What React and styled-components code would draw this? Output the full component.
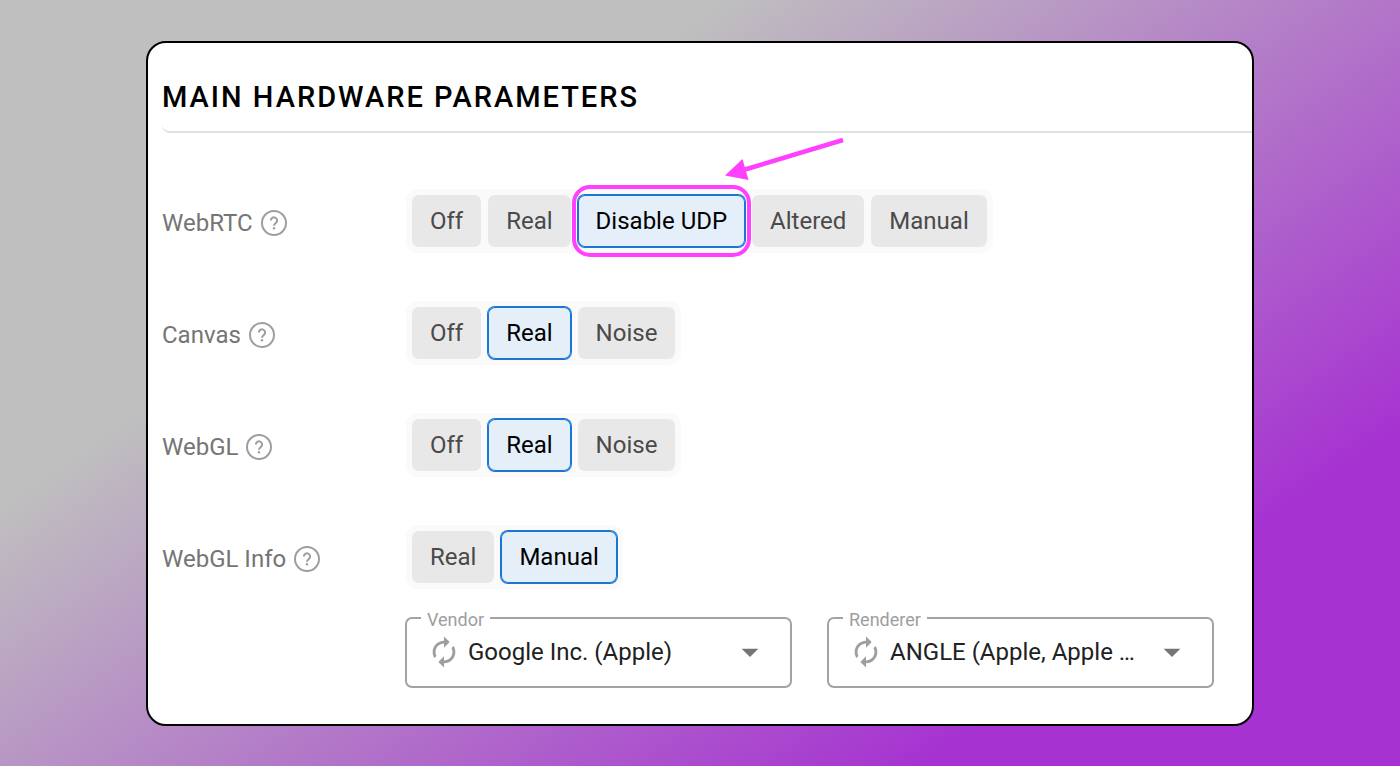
import { useState } from 'react'
import styled, { createGlobalStyle } from 'styled-components'
import { MdArrowDropDown, MdAutorenew } from 'react-icons/md'

const ROWS = [
  { name: 'WebRTC', options: ['Off', 'Real', 'Disable UDP', 'Altered', 'Manual'], value: 'Disable UDP', marked: 'Disable UDP' },
  { name: 'Canvas', options: ['Off', 'Real', 'Noise'], value: 'Real' },
  { name: 'WebGL', options: ['Off', 'Real', 'Noise'], value: 'Real' },
  { name: 'WebGL Info', options: ['Real', 'Manual'], value: 'Manual' },
]

const HelpIcon = () => (
  <svg width="28" height="28" viewBox="0 0 28 28" fill="none" stroke="currentColor" strokeWidth="2" aria-hidden="true">
    <circle cx="14" cy="14" r="12" />
    <path d="M10.9 11.5a3.1 3.1 0 1 1 5.2 2.2c-1.1 1-2.1 1.5-2.1 3.1" />
    <circle cx="14" cy="19.3" r="1.2" fill="currentColor" stroke="none" />
  </svg>
)

const OptionRow = ({ row }) => {
  const [value, setValue] = useState(row.value)

  return (
    <Row>
      <RowLabel>
        {row.name}
        <HelpButton type="button" aria-label={`About ${row.name}`}>
          <HelpIcon />
        </HelpButton>
      </RowLabel>
      <Group role="group" aria-label={row.name}>
        {row.options.map((option) => (
          <Option
            key={option}
            type="button"
            $active={option === value}
            aria-pressed={option === value}
            onClick={() => setValue(option)}
          >
            {option}
            {option === row.marked && (
              <>
                <Marker />
                <Arrow viewBox="0 0 120 42" aria-hidden="true">
                  <path d="M118 3 20 32.5" stroke="#ff40ff" strokeWidth="4.5" />
                  <path d="M0 38.5 17.5 22 23.5 43z" fill="#ff40ff" />
                </Arrow>
              </>
            )}
          </Option>
        ))}
      </Group>
    </Row>
  )
}

const SelectField = ({ id, label, value }) => (
  <Field>
    <Legend>
      <label htmlFor={id}>{label}</label>
    </Legend>
    <Control>
      <MdAutorenew size={34} color="#9e9e9e" />
      <Select id={id} defaultValue={value}>
        <option>{value}</option>
      </Select>
      <MdArrowDropDown size={40} color="#757575" />
    </Control>
  </Field>
)

export default function App() {
  return (
    <>
      <GlobalStyle />
      <Page>
        <Card>
          <Title>MAIN HARDWARE PARAMETERS</Title>
          <Rows>
            {ROWS.map((row) => (
              <OptionRow key={row.name} row={row} />
            ))}
          </Rows>
          <Fields>
            <SelectField id="vendor" label="Vendor" value="Google Inc. (Apple)" />
            <SelectField id="renderer" label="Renderer" value="ANGLE (Apple, Apple …" />
          </Fields>
        </Card>
      </Page>
    </>
  )
}

const GlobalStyle = createGlobalStyle`
  * {
    box-sizing: border-box;
  }

  body {
    margin: 0;
    font-family: Roboto, sans-serif;
  }

  button, select {
    font: inherit;
  }
`

const Page = styled.div`
  min-height: 100vh;
  padding: 41px 146px;
  background: linear-gradient(145deg, #bfbfbf 29%, #a632d1 81%);
`

const Card = styled.main`
  padding: 32px 0 36px 14px;
  border: 2px solid #000;
  border-radius: 20px;
  background: #fff;
`

const Title = styled.h1`
  margin: 0;
  padding-bottom: 12px;
  border-bottom: 2px solid #e0e0e0;
  border-bottom-left-radius: 8px;
  color: #000;
  font-size: 29px;
  font-weight: 500;
  line-height: 44px;
  letter-spacing: 2px;
`

const Rows = styled.div`
  display: flex;
  flex-direction: column;
  gap: 48px;
  padding-top: 56px;
`

const Row = styled.div`
  display: grid;
  grid-template-columns: 244px 1fr;
  align-items: center;
`

const RowLabel = styled.div`
  display: flex;
  align-items: center;
  gap: 7px;
  padding-top: 4px;
  color: #757575;
  font-size: 24px;
  line-height: 28px;
`

const HelpButton = styled.button`
  display: flex;
  padding: 0;
  border: 0;
  background: none;
  color: #9e9e9e;
  cursor: pointer;
`

const Group = styled.div`
  display: flex;
  gap: 7px;
  width: max-content;
  padding: 6px;
  border-radius: 12px;
  background: #fafafa;
`

const Option = styled.button`
  position: relative;
  height: 52px;
  padding: 0 18px;
  border: 0;
  border-radius: 7px;
  background: ${({ $active }) => ($active ? '#e5effa' : '#e8e8e8')};
  box-shadow: ${({ $active }) => ($active ? '0 0 0 1px #1976d2, inset 0 0 0 1px #1976d2' : 'none')};
  color: ${({ $active }) => ($active ? '#000' : '#4a4a4a')};
  font-size: 24px;
  line-height: 28px;
  cursor: pointer;
`

const Marker = styled.span`
  position: absolute;
  z-index: 1;
  inset: -10px -6px;
  border: 4px solid #ff40ff;
  border-radius: 18px;
  pointer-events: none;
`

const Arrow = styled.svg`
  position: absolute;
  z-index: 1;
  right: -100px;
  bottom: 68px;
  width: 120px;
  height: 42px;
  overflow: visible;
  pointer-events: none;
`

const Fields = styled.div`
  display: grid;
  grid-template-columns: 1fr 1fr;
  gap: 35px;
  padding: 17px 38px 0 243px;
`

const Field = styled.fieldset`
  min-width: 0;
  margin: 0;
  padding: 0 20px;
  border: 2px solid #a3a3a3;
  border-radius: 7px;
`

const Legend = styled.legend`
  margin-left: -6px;
  padding: 4px 6px 0;
  color: #9e9e9e;
  font-size: 18px;
  line-height: 20px;
`

const Control = styled.div`
  display: flex;
  align-items: center;
  height: 56px;
  padding-bottom: 12px;
`

const Select = styled.select`
  flex: 1;
  min-width: 0;
  margin-left: 7px;
  padding: 0;
  border: 0;
  outline: none;
  appearance: none;
  background: none;
  color: #212121;
  font-size: 24px;
  line-height: 32px;
  text-overflow: ellipsis;
`
